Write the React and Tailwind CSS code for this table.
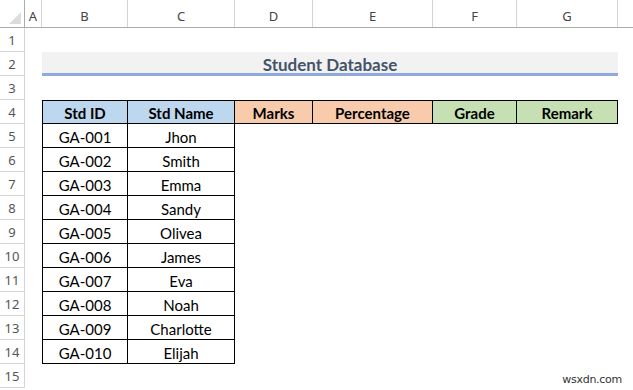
import React from 'react';

const cols = [
  { key: 'A', w: 'w-[17px]' },
  { key: 'B', w: 'w-[86px]' },
  { key: 'C', w: 'w-[107px]' },
  { key: 'D', w: 'w-[78px]' },
  { key: 'E', w: 'w-[120px]' },
  { key: 'F', w: 'w-[84px]' },
  { key: 'G', w: 'w-[101px]' },
];

const students = [
  ['GA-001', 'Jhon'],
  ['GA-002', 'Smith'],
  ['GA-003', 'Emma'],
  ['GA-004', 'Sandy'],
  ['GA-005', 'Olivea'],
  ['GA-006', 'James'],
  ['GA-007', 'Eva'],
  ['GA-008', 'Noah'],
  ['GA-009', 'Charlotte'],
  ['GA-010', 'Elijah'],
];

const headers = [
  { label: 'Std ID', w: 'w-[86px]', bg: 'bg-[#bdd7ee]' },
  { label: 'Std Name', w: 'w-[107px]', bg: 'bg-[#bdd7ee]' },
  { label: 'Marks', w: 'w-[78px]', bg: 'bg-[#f8cbad]' },
  { label: 'Percentage', w: 'w-[120px]', bg: 'bg-[#f8cbad]' },
  { label: 'Grade', w: 'w-[84px]', bg: 'bg-[#c6e0b4]' },
  { label: 'Remark', w: 'w-[101px]', bg: 'bg-[#c6e0b4]' },
];

const RowNum = ({ n }) => (
  <div className="w-[25px] h-full shrink-0 border-r border-b border-[#d4d4d4] flex items-center justify-center pt-[3px] text-[13px] text-[#555] font-['Noto_Sans',sans-serif]">
    {n}
  </div>
);

const Row = ({ n, children }) => (
  <div className="flex h-[24px]">
    <RowNum n={n} />
    <div className="w-[17px] shrink-0" />
    {children}
  </div>
);

export default function App() {
  return (
    <div className="w-[633px] h-[390px] bg-white overflow-hidden relative font-['Lato',sans-serif] text-black">
      {/* column headers */}
      <div className="flex h-[28px] border-b border-[#ababab]">
        <div className="w-[25px] shrink-0 border-r border-[#ababab] relative">
          <div className="absolute right-[3px] bottom-[3px] w-0 h-0 border-l-[12px] border-l-transparent border-b-[12px] border-b-[#dcdcdc]" />
        </div>
        {cols.map((c) => (
          <div
            key={c.key}
            className={`${c.w} shrink-0 border-r border-[#d4d4d4] flex items-center justify-center text-[13px] text-[#444] font-['Noto_Sans',sans-serif] pt-[7px]`}
          >
            {c.key}
          </div>
        ))}
        <div className="flex-1" />
      </div>

      <Row n={1} />

      {/* title */}
      <div className="flex h-[24px]">
        <RowNum n={2} />
        <div className="w-[17px] shrink-0" />
        <div className="w-[576px] shrink-0 bg-[#f2f2f2] border-b-[3px] border-[#8ea9db] flex items-center justify-center text-[17px] font-bold text-[#44546a] pt-[5px]">
          Student Database
        </div>
      </div>

      <Row n={3} />

      <Row n={4}>
        {headers.map((h, i) => (
          <div
            key={h.label}
            className={`${h.w} ${h.bg} shrink-0 border-t border-b border-r border-black ${i === 0 ? 'border-l' : ''} flex items-center justify-center pt-[2px] text-[15px] font-bold`}
          >
            {h.label}
          </div>
        ))}
      </Row>

      {students.map(([id, name], i) => (
        <Row key={id} n={i + 5}>
          <div className="w-[86px] shrink-0 border-l border-r border-b border-black flex items-center justify-center pt-[3px] text-[15px]">
            {id}
          </div>
          <div className="w-[107px] shrink-0 border-r border-b border-black flex items-center justify-center pt-[3px] text-[15px]">
            {name}
          </div>
        </Row>
      ))}

      <Row n={15} />

      <div className="absolute right-[11px] bottom-[2px] text-[11px] text-[#333] font-['DejaVu_Sans',sans-serif] tracking-tight">
        wsxdn.com
      </div>
    </div>
  );
}
